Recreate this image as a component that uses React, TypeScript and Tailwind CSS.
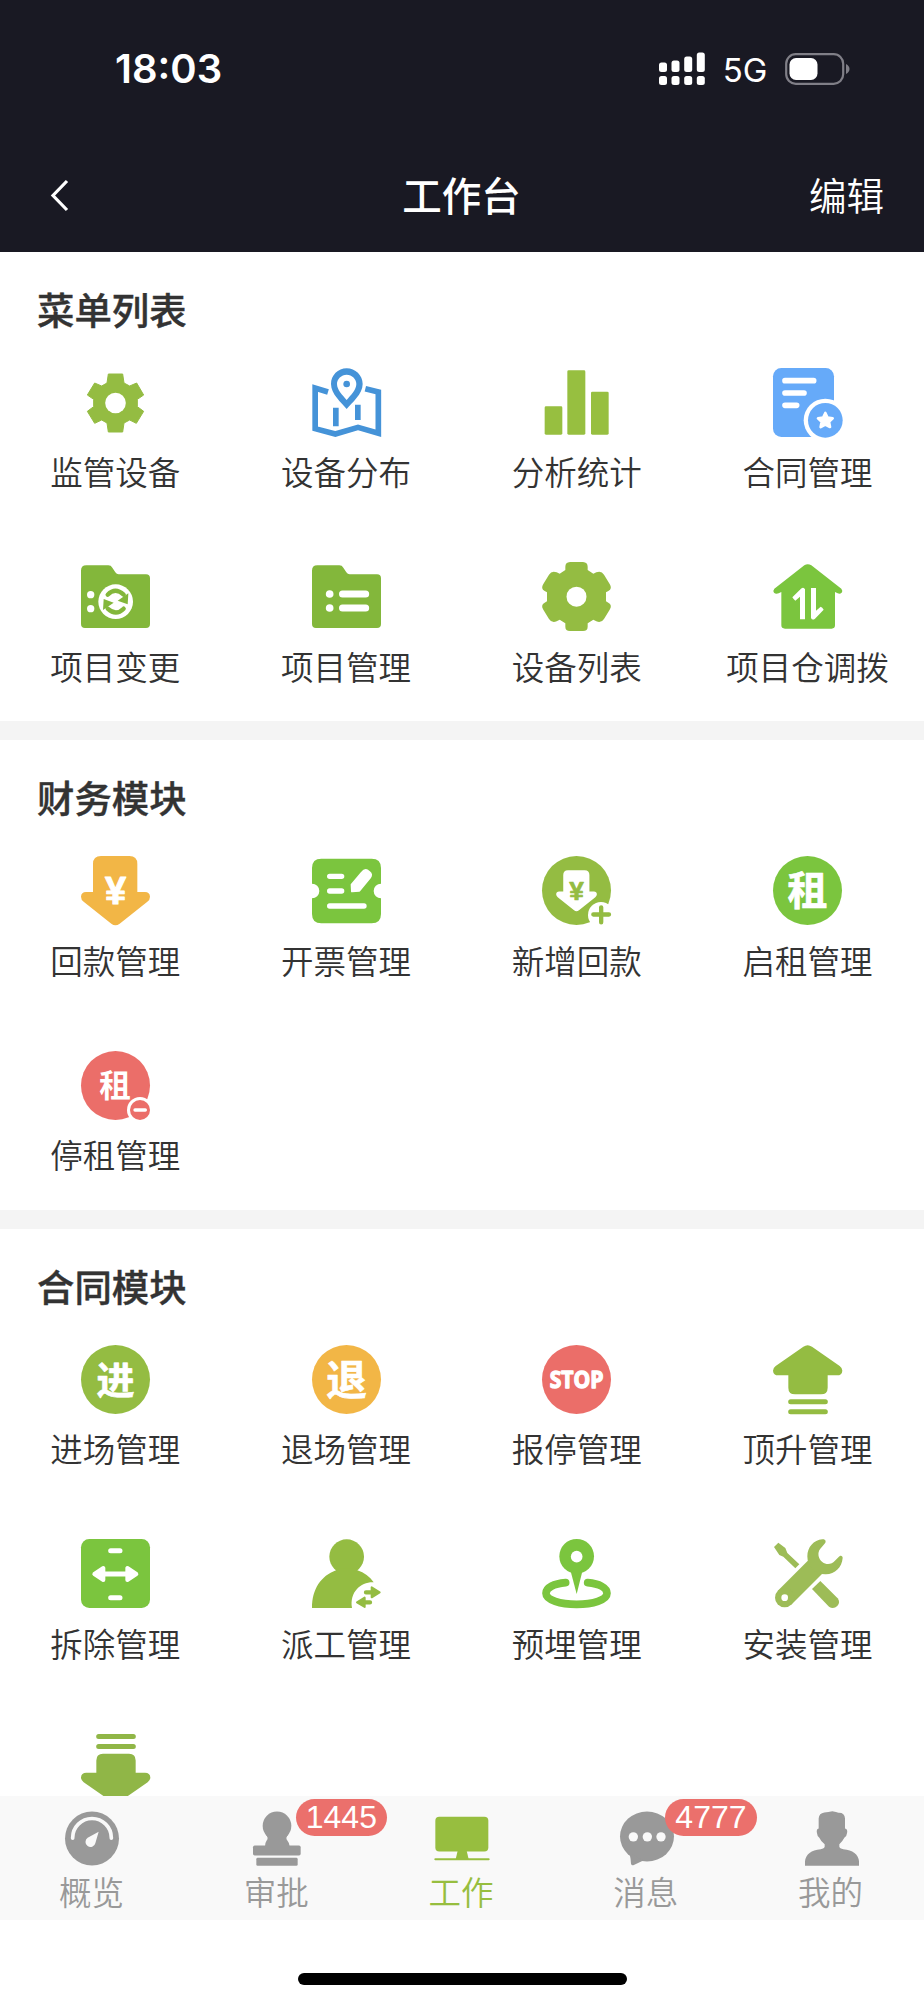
import type { ReactNode } from 'react';

interface MenuItem {
  label?: string;
  icon: ReactNode;
}

interface MenuSection {
  title: string;
  items: MenuItem[];
}

interface TabItem {
  label: string;
  icon: ReactNode;
  badge?: string;
  active?: boolean;
}

const OLIVE = '#94bc42';
const GREEN = '#7bc53e';
const FOLDER = '#83b73b';
const YELLOW = '#f2b646';
const RED = '#eb6e69';
const BLUE = '#4593d8';
const SKY = '#66aaf9';

const DOWN_ARROW =
  'M60 0H145Q169 0 169 24V108H192Q206 108 207 122Q207 131 199 137L116 203Q103 213 91 203L8 137Q0 131 0 122Q1 108 15 108H36V24Q36 0 60 0Z';
const FOLDER_BODY =
  'M16 10H82Q90 10 94 17L103 31Q107 37 113 37H195Q207 37 207 49V186Q207 198 195 198H12Q0 198 0 186V26Q0 10 16 10Z';
const LIFT_ARROW =
  'M91 5Q104 -4 117 5L200 63Q208 69 208 77Q207 91 192 91H164V128Q164 148 144 148H66Q46 148 46 128V91H16Q1 91 0 77Q0 69 8 63Z';

function Icon({ children }: { children: ReactNode }) {
  return (
    <svg viewBox="0 0 207 207" className="w-[69px] h-[69px] overflow-visible" fill="none">
      {children}
    </svg>
  );
}

function TabIcon({ children }: { children: ReactNode }) {
  return (
    <svg viewBox="0 0 162 164" className="w-[54px] h-[55px] overflow-visible" fill="currentColor">
      {children}
    </svg>
  );
}

// Round icon with a single character in the middle
function CharIcon({ char, color, size }: { char: string; color: string; size: number }) {
  return (
    <Icon>
      <circle cx="103.5" cy="103.5" r="103.5" fill={color} />
      <text
        x="103.5"
        y={102.5 + size * 0.38}
        fontSize={size}
        textAnchor="middle"
        fill="white"
        stroke="white"
        strokeWidth="2"
        strokeLinejoin="round"
        className="font-bold"
      >
        {char}
      </text>
    </Icon>
  );
}

function Yen({ color }: { color: string }) {
  return (
    <text
      x="103.5"
      y="143"
      fontSize="114"
      textAnchor="middle"
      fill={color}
      stroke={color}
      strokeWidth="3"
      strokeLinejoin="round"
      className="font-['Liberation_Sans',sans-serif] font-bold"
    >
      ¥
    </text>
  );
}

const sections: MenuSection[] = [
  {
    title: '菜单列表',
    items: [
      {
        label: '监管设备',
        icon: (
          <Icon>
            <path
              d="M82 18H125L129 45L146 54L167 45L188 81L169 94V116L188 130L166 166L146 156L129 165L125 192H82L78 165L62 156L41 166L19 130L38 116V94L19 81L41 45L62 54L78 45Z"
              fill={OLIVE}
              stroke={OLIVE}
              strokeWidth="3"
              strokeLinejoin="round"
            />
            <circle cx="103.5" cy="105" r="31" fill="white" />
          </Icon>
        ),
      },
      {
        label: '设备分布',
        icon: (
          <Icon>
            <path d="M48 72L9.500 60V182L70 198L138 178L199 196V72L160 62" stroke={BLUE} strokeWidth="17" />
            <path d="M63 119H80V175H63ZM129 110H146V156H129Z" fill={BLUE} />
            <path
              d="M104 1C78 1 57 22 57 48C57 78 88 104 104 123C120 104 152 78 152 48C152 22 130 1 104 1ZM104 20C120 20 133 33 133 48C133 66 116 82 104 96C92 82 75 66 75 48C75 33 88 20 104 20Z"
              fill={BLUE}
              fillRule="evenodd"
            />
            <circle cx="104" cy="48" r="10" fill={BLUE} />
          </Icon>
        ),
      },
      {
        label: '分析统计',
        icon: (
          <Icon>
            <g fill="#97bf40">
              <rect x="8" y="115" width="53" height="85" rx="4" />
              <rect x="76" y="7" width="54" height="193" rx="4" />
              <rect x="147" y="71" width="53" height="129" rx="4" />
            </g>
          </Icon>
        ),
      },
      {
        label: '合同管理',
        icon: (
          <Icon>
            <rect x="0" y="0" width="183" height="207" rx="25" fill={SKY} />
            <path d="M36 38H122M36 75H93M36 112H71" stroke="white" strokeWidth="17" strokeLinecap="round" />
            <circle cx="157" cy="157" r="65" fill="white" />
            <circle cx="157" cy="157" r="52" fill={SKY} />
            <path
              d="M157 135L163.500 149L179 151L168 161.500L171 177L157 169.500L143 177L146 161.500L135 151L150.500 149Z"
              fill="white"
              stroke="white"
              strokeWidth="8"
              strokeLinejoin="round"
            />
          </Icon>
        ),
      },
      {
        label: '项目变更',
        icon: (
          <Icon>
            <path d={FOLDER_BODY} fill={FOLDER} />
            <circle cx="29" cy="98" r="11" fill="white" />
            <circle cx="29" cy="140" r="11" fill="white" />
            <circle cx="104" cy="119" r="52" fill="white" />
            <path d="M80 98Q103 75 128 98" stroke={FOLDER} strokeWidth="13" strokeLinecap="round" />
            <path d="M142 94L140 127L110 116Z" fill={FOLDER} />
            <path d="M128 140Q105 163 80 140" stroke={FOLDER} strokeWidth="13" strokeLinecap="round" />
            <path d="M66 144L68 111L98 122Z" fill={FOLDER} />
          </Icon>
        ),
      },
      {
        label: '项目管理',
        icon: (
          <Icon>
            <path d={FOLDER_BODY} fill={FOLDER} />
            <circle cx="53" cy="96" r="11.5" fill="white" />
            <circle cx="53" cy="138" r="11.5" fill="white" />
            <path d="M91.500 96H161M91.500 138H161" stroke="white" strokeWidth="21" strokeLinecap="round" />
          </Icon>
        ),
      },
      {
        label: '设备列表',
        icon: (
          <Icon>
            <path
              d="M84 0H123Q137 1 137 14V24L154 35L163 31Q178 25 186 38L203 66Q212 80 199 87L192 91V118L199 122Q212 129 203 143L186 171Q178 184 163 178L154 173L137 184V194Q137 207 123 207H84Q70 207 70 194V184L53 173L44 178Q29 184 21 171L4 143Q-5 129 8 122L15 118V91L8 87Q-5 80 4 66L21 38Q29 25 44 31L53 35L70 24V14Q70 1 84 0Z"
              fill={OLIVE}
            />
            <circle cx="103.5" cy="104" r="30" fill="white" />
          </Icon>
        ),
      },
      {
        label: '项目仓调拨',
        icon: (
          <Icon>
            <path
              d="M94 10Q104 3 115 10L205 80Q210 86 206 92Q201 97 194 94L186 90V190Q186 200 176 200H36Q25 200 25 190V90L17 94Q8 97 3 92Q-1 86 4 80Z"
              fill={GREEN}
            />
            <path
              d="M81 172V104L67 116Q63 114 58 106L84 80Q92 74 96 82V172ZM114 78H129V146L143 134Q148 136 152 143L126 170Q118 176 114 168Z"
              fill="white"
            />
          </Icon>
        ),
      },
    ],
  },
  {
    title: '财务模块',
    items: [
      {
        label: '回款管理',
        icon: (
          <Icon>
            <path d={DOWN_ARROW} fill={YELLOW} />
            <Yen color="white" />
          </Icon>
        ),
      },
      {
        label: '开票管理',
        icon: (
          <Icon>
            <path
              d="M28 8H179Q207 8 207 36V83A22 22 0 0 0 207 127V174Q207 202 179 202H28Q0 202 0 174V127A22 22 0 0 0 0 83V36Q0 8 28 8Z"
              fill={GREEN}
            />
            <path d="M53 61H89M53 105H89M53 150H156" stroke="white" strokeWidth="16" strokeLinecap="round" />
            <path
              d="M119 86L150 49Q158 39 167 44L172 48Q181 55 174 65L142 104L120 106Z"
              fill="white"
              stroke="white"
              strokeWidth="6"
              strokeLinejoin="round"
            />
          </Icon>
        ),
      },
      {
        label: '新增回款',
        icon: (
          <Icon>
            <circle cx="103.5" cy="103.5" r="103.5" fill={OLIVE} />
            <g transform="translate(42.5 43) scale(.59)">
              <path d={DOWN_ARROW} fill="white" />
              <g transform="translate(-17 -14) scale(1.17)">
                <Yen color={OLIVE} />
              </g>
            </g>
            <circle cx="177" cy="177" r="39" fill="white" />
            <path d="M154 175.500H201M177.500 154V199" stroke={OLIVE} strokeWidth="13" strokeLinecap="round" />
          </Icon>
        ),
      },
      { label: '启租管理', icon: <CharIcon char="租" color={GREEN} size={120} /> },
      {
        label: '停租管理',
        icon: (
          <Icon>
            <circle cx="103.5" cy="103.5" r="103.5" fill={RED} />
            <text x="102" y="139" fontSize="95" textAnchor="middle" fill="white" className="font-bold">
              租
            </text>
            <circle cx="177" cy="177" r="39" fill="white" />
            <circle cx="177" cy="177" r="30" fill={RED} />
            <path d="M162 177H193" stroke="white" strokeWidth="10" strokeLinecap="round" />
          </Icon>
        ),
      },
    ],
  },
  {
    title: '合同模块',
    items: [
      { label: '进场管理', icon: <CharIcon char="进" color={OLIVE} size={114} /> },
      { label: '退场管理', icon: <CharIcon char="退" color={YELLOW} size={122} /> },
      {
        label: '报停管理',
        icon: (
          <Icon>
            <circle cx="103.5" cy="103.5" r="103.5" fill={RED} />
            <text
              x="23"
              y="128"
              fontSize="68"
              textLength="161"
              lengthAdjust="spacingAndGlyphs"
              fill="white"
              stroke="white"
              strokeWidth="4"
              strokeLinejoin="round"
              className="font-['Open_Sans',sans-serif] font-bold"
            >
              STOP
            </text>
          </Icon>
        ),
      },
      {
        label: '顶升管理',
        icon: (
          <Icon>
            <path d={LIFT_ARROW} fill={OLIVE} />
            <path d="M53 170H157M53 200H157" stroke={OLIVE} strokeWidth="15" strokeLinecap="round" />
          </Icon>
        ),
      },
      {
        label: '拆除管理',
        icon: (
          <Icon>
            <rect width="207" height="207" rx="25" fill={GREEN} />
            <path d="M89 35H117M89 176H117M60 105H148" stroke="white" strokeWidth="15" strokeLinecap="round" />
            <path
              d="M40 105L67 87V123ZM166 105L139 87V123Z"
              fill="white"
              stroke="white"
              strokeWidth="12"
              strokeLinejoin="round"
            />
          </Icon>
        ),
      },
      {
        label: '派工管理',
        icon: (
          <Icon>
            <circle cx="104" cy="53" r="52" fill={OLIVE} />
            <path
              d="M0 207C0 150 27 111 72 94L74 88H134L136 94C157 101 173 113 185 130C148 128 112 158 120 207Z"
              fill={OLIVE}
            />
            <path d="M162 160H182M174 190H154" stroke={OLIVE} strokeWidth="13" strokeLinecap="round" />
            <path
              d="M203 160L179 145V175ZM135 190L158 176V204Z"
              fill={OLIVE}
              stroke={OLIVE}
              strokeWidth="6"
              strokeLinejoin="round"
            />
          </Icon>
        ),
      },
      {
        label: '预埋管理',
        icon: (
          <Icon>
            <path
              d="M71 131C35 134 12 146 12 163C12 183 55 196 104 196C153 196 195 183 195 163C195 146 172 134 137 131"
              stroke={GREEN}
              strokeWidth="23"
              strokeLinecap="round"
            />
            <circle cx="104" cy="52" r="52" fill={GREEN} />
            <path d="M85 93L104 165L122 93Z" fill={GREEN} />
            <circle cx="104" cy="53" r="17.5" fill="white" />
          </Icon>
        ),
      },
      {
        label: '安装管理',
        icon: (
          <Icon>
            <g fill="#9dbc57">
              <path d="M35 176L128 83" stroke="#9dbc57" strokeWidth="58" />
              <circle cx="35" cy="176" r="29" />
              <path d="M148 1C158 0 160 8 156 13L142 29C132 40 136 60 148 69C160 79 177 76 185 66L197 54C203 47 209 50 209 57C207 85 185 107 157 106C125 106 103 82 103 52C103 25 122 3 148 1Z" />
              <path d="M3 24L16 11L37 27L43 42L79 76L67 88L31 53L19 48Z" />
              <path d="M117 150L142 126L194 178Q203 190 193 201Q181 212 168 203Z" />
            </g>
            <circle cx="35" cy="176" r="10" fill="white" />
          </Icon>
        ),
      },
      {
        icon: (
          <Icon>
            <g transform="matrix(1 0 0 -1 0 207.5)">
              <path d={LIFT_ARROW} fill="#90b647" />
              <path d="M53 170H157M53 200H157" stroke="#90b647" strokeWidth="15" strokeLinecap="round" />
            </g>
          </Icon>
        ),
      },
    ],
  },
];

const tabs: TabItem[] = [
  {
    label: '概览',
    icon: (
      <TabIcon>
        <circle cx="81" cy="82" r="81" />
        <path d="M23 81V80A58 58 0 0 1 139 80V81" fill="none" stroke="#f9f9f9" strokeWidth="11" strokeLinecap="round" />
        <path d="M101 62L91 96A15 15 0 1 1 68 80Z" fill="#f9f9f9" />
      </TabIcon>
    ),
  },
  {
    label: '审批',
    badge: '1445',
    icon: (
      <TabIcon>
        <circle cx="81" cy="44" r="43" />
        <path d="M47 70Q57 80 50 88Q45 95 45 105H119Q118 95 112 88Q105 80 115 70Z" />
        <rect x="9" y="103" width="143" height="30" rx="5" />
        <rect x="19" y="140" width="124" height="24" rx="4" />
      </TabIcon>
    ),
  },
  {
    label: '工作',
    active: true,
    icon: (
      <TabIcon>
        <rect x="1" y="17" width="159" height="104" rx="12" />
        <path d="M68 119L62 144H101L95 119Z" />
        <path d="M1 144.500H161" stroke="currentColor" strokeWidth="6" strokeLinecap="round" />
      </TabIcon>
    ),
  },
  {
    label: '消息',
    badge: '4777',
    icon: (
      <TabIcon>
        <ellipse cx="81" cy="76" rx="81" ry="75" />
        <path d="M29 128Q32 142 33 158Q35 164 40 162L70 148Z" />
        <g fill="#f9f9f9">
          <circle cx="40" cy="77" r="14" />
          <circle cx="82" cy="77" r="14" />
          <circle cx="123" cy="77" r="14" />
        </g>
      </TabIcon>
    ),
  },
  {
    label: '我的',
    icon: (
      <TabIcon>
        <path d="M41 22Q42 6 58 4Q70 3 82 0Q95 2 100 5Q119 4 120 22V52Q129 54 126 66Q125 76 118 80Q112 92 103 99V107Q104 112 115 114Q158 118 162 150V164H0V150Q4 118 47 114Q58 112 59 107V99Q48 92 43 80Q37 76 36 66Q33 54 41 52Z" />
      </TabIcon>
    ),
  },
];

function StatusBar() {
  return (
    <div className="flex h-[138px] items-center pl-[115px] pr-[74.500px] font-['Inter',sans-serif] text-white">
      <span className="text-[40px] leading-none font-semibold">18:03</span>
      <div className="ml-auto flex items-center">
        <svg width="46" height="34" viewBox="0 0 46 34" fill="white">
          <rect x="0" y="10.5" width="8" height="9.500" rx="2.500" />
          <rect x="12.500" y="8.500" width="8" height="11.500" rx="2.500" />
          <rect x="25.200" y="4.500" width="8" height="15.500" rx="2.500" />
          <rect x="37.800" y="0.500" width="8" height="19.500" rx="2.500" />
          <rect x="0" y="24" width="8" height="9" rx="2.500" />
          <rect x="12.500" y="24" width="8" height="9" rx="2.500" />
          <rect x="25.200" y="24" width="8" height="9" rx="2.500" />
          <rect x="37.800" y="24" width="8" height="9" rx="2.500" />
        </svg>
        <span className="mt-[2px] ml-[18px] text-[33px] leading-none">5G</span>
        <svg className="ml-[17px]" width="65" height="32" viewBox="0 0 65 32">
          <rect x="1.2" y="1.2" width="57" height="29.600" rx="9.500" fill="none" stroke="#807f87" strokeWidth="2.200" />
          <rect x="4.500" y="5" width="28" height="22" rx="6.500" fill="white" />
          <path d="M61 11Q64.500 13 64.500 16T61 21Z" fill="#807f87" />
        </svg>
      </div>
    </div>
  );
}

function NavBar() {
  return (
    <div className="grid h-[113.5px] grid-cols-3 items-center px-[40px] text-white">
      <svg width="38" height="38" viewBox="0 0 38 38" fill="none" stroke="white" strokeWidth="3.200">
        <path d="M27 5L13 19.500L27 34" />
      </svg>
      <h1 className="-mt-[2px] mr-px text-center text-[39.5px] leading-none font-medium">工作台</h1>
      <button className="-mt-[2px] text-right text-[37.5px] leading-none font-[350]">编辑</button>
    </div>
  );
}

export default function App() {
  return (
    <div className="flex h-[2000px] w-[924px] flex-col overflow-hidden bg-white font-['Noto_Sans_CJK_SC',sans-serif] text-[#333]">
      <header className="shrink-0 bg-[#191923]">
        <StatusBar />
        <NavBar />
      </header>

      <main className="min-h-0 flex-1 overflow-hidden">
        {sections.map((section) => (
          <section key={section.title} className="border-b-[19px] border-[#f4f4f4]">
            <h2 className="h-[80px] pt-[37px] pl-[37px] text-[37.4px] leading-[40px] font-medium [-webkit-text-stroke:0.4px_#333]">
              {section.title}
            </h2>
            <div className="mr-px grid grid-cols-4">
              {section.items.map((item, i) => (
                <div key={i} className="flex h-[194.75px] flex-col items-center pt-[36px]">
                  {item.icon}
                  {item.label && (
                    <span className="mt-[11.500px] text-[32.5px] leading-[46px] font-[350] whitespace-nowrap">
                      {item.label}
                    </span>
                  )}
                </div>
              ))}
            </div>
          </section>
        ))}
      </main>

      <nav className="grid h-[123.5px] shrink-0 grid-cols-5 bg-[#f9f9f9]">
        {tabs.map((tab) => (
          <div
            key={tab.label}
            className={`relative flex flex-col items-center pt-[14.5px] ${tab.active ? 'text-[#97be3f]' : 'text-[#999]'}`}
          >
            {tab.icon}
            <span className="mt-[2px] mr-[2px] text-[32.5px] leading-[46px] font-[350]">{tab.label}</span>
            {tab.badge && (
              <span className="absolute top-[2.500px] left-[110.800px] h-[37px] w-[91.500px] rounded-full bg-[#eb706c] text-center font-['Liberation_Sans',sans-serif] text-[32px] leading-[37px] text-white">
                {tab.badge}
              </span>
            )}
          </div>
        ))}
      </nav>

      <div className="flex h-[80.5px] shrink-0 justify-center pt-[53px]">
        <div className="h-[12px] w-[329px] rounded-full bg-black" />
      </div>
    </div>
  );
}
